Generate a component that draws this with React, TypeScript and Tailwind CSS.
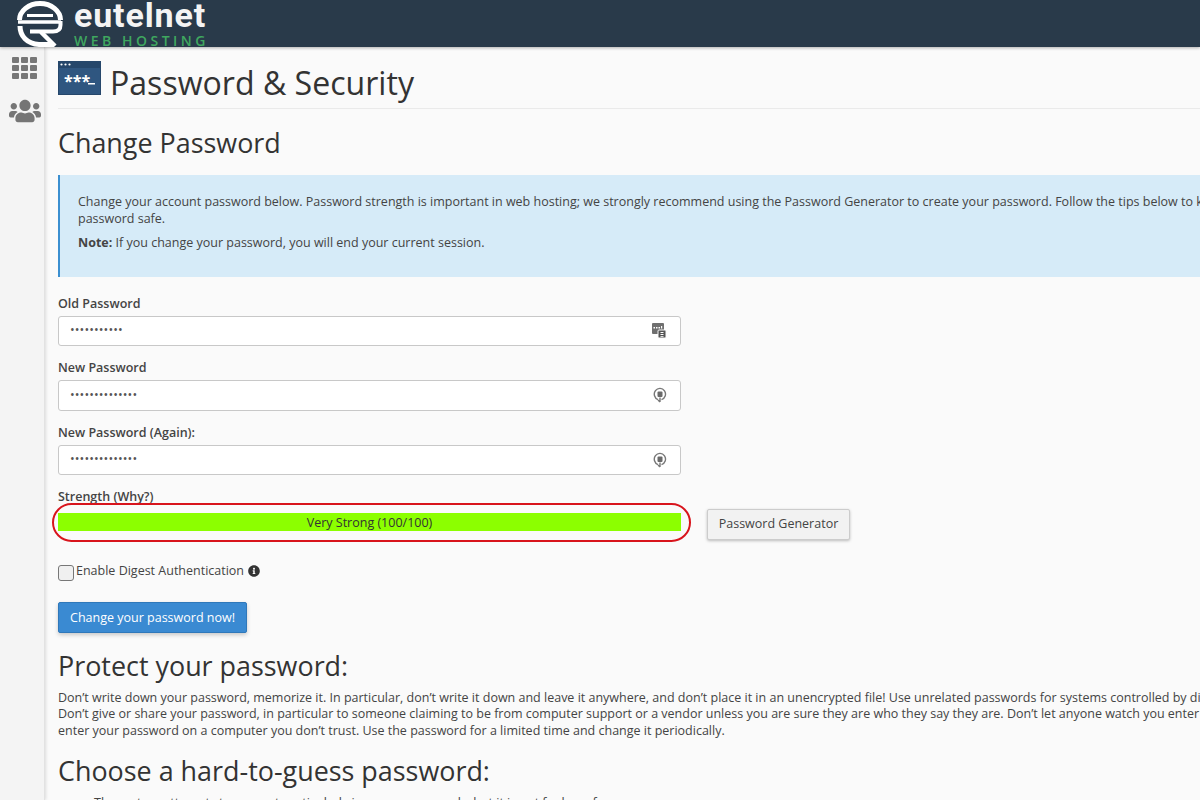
import { FaUsers, FaInfoCircle } from "react-icons/fa"

function Logo() {
  return (
    <svg width="46" height="47" viewBox="0 0 46 47" className="shrink-0" fill="none" stroke="#fff">
      <path d="M2.5 20 A 20.5 16.5 0 0 1 43.5 20" strokeWidth="5" />
      <path d="M10 15.5 H 36" strokeWidth="3" />
      <path d="M1 22 H 44" strokeWidth="3.5" />
      <path d="M43.5 21 V 25 Q 43.5 31.5 36 31.5 H 13" strokeWidth="4" />
      <path d="M3 26 C 3 36 10 44 22 44.5 H 37" strokeWidth="5" />
      <path d="M24 32 L 38 46" strokeWidth="4.5" />
    </svg>
  )
}

function PasswordPageIcon() {
  return (
    <svg width="43" height="34" viewBox="0 0 43 34" className="shrink-0">
      <rect width="43" height="34" fill="#2f5680" />
      <rect width="43" height="7" fill="#26476b" />
      <rect x="0.5" y="0.5" width="42" height="33" fill="none" stroke="#26476b" />
      <circle cx="3.5" cy="3.5" r="1.1" fill="#fff" />
      <circle cx="7.5" cy="3.5" r="1.1" fill="#fff" />
      <circle cx="11.5" cy="3.5" r="1.1" fill="#fff" />
      <text x="6" y="26" fill="#fff" fontSize="16" fontWeight="700" fontFamily="'Open Sans', sans-serif">***</text>
      <rect x="30" y="22" width="7" height="1.5" fill="#fff" />
    </svg>
  )
}

function KeyIcon() {
  return (
    <svg width="16" height="17" viewBox="0 0 16 17" className="shrink-0">
      <rect x="1" y="1" width="12" height="11" rx="1" fill="#6f6f6f" />
      <rect x="2.5" y="5" width="1.5" height="1.5" fill="#fff" />
      <rect x="5" y="5" width="1.5" height="1.5" fill="#fff" />
      <rect x="7.5" y="5" width="1.5" height="1.5" fill="#fff" />
      <rect x="10" y="4" width="1.2" height="2.5" fill="#fff" />
      <rect x="7" y="8" width="8" height="8" rx="1" fill="#555" stroke="#fafafa" />
      <rect x="9.5" y="10" width="3" height="1" fill="#fff" />
      <rect x="9.5" y="12" width="3" height="1" fill="#fff" />
      <rect x="9.5" y="14" width="3" height="0.8" fill="#fff" />
    </svg>
  )
}

function RefreshLockIcon() {
  return (
    <svg width="14" height="16" viewBox="0 0 14 16" className="shrink-0">
      <path d="M8.5 12.7 A 5.6 5.8 0 1 0 5 12.6" fill="none" stroke="#777" strokeWidth="1.4" />
      <rect x="4.5" y="4.5" width="5" height="5.5" rx="1" fill="#6a6a6a" />
      <path d="M7 10.5 V 15 M 5 13 L 7 15" stroke="#777" strokeWidth="1.4" fill="none" />
    </svg>
  )
}

function PasswordField({ label, dots, icon }: { label: string; dots: string; icon: React.ReactNode }) {
  return (
    <div className="w-[623px]">
      <label className="block text-[12.5px] leading-[17px] font-semibold text-[#444]">{label}</label>
      <div className="mt-[4px] h-[30.5px] flex items-center justify-between pl-[11px] pr-[13px] bg-white border border-[#c8c8c8] rounded-[3px]">
        <span className="text-[12.5px] text-[#555] tracking-[0.1px]">{dots}</span>
        {icon}
      </div>
    </div>
  )
}

export default function App() {
  return (
    <div className="w-[1200px] h-[800px] overflow-hidden bg-[#fafafa] text-[#333] font-['Open_Sans',sans-serif] text-[12.5px]">
      <header className="h-[47px] bg-[#293a4a] flex items-start pl-[17px] shadow-[0_1px_3px_rgba(0,0,0,0.3)] relative z-10 overflow-hidden">
        <Logo />
        <div className="ml-[11px] flex flex-col">
          <span className="text-[34px] leading-[30px] font-bold text-[#f4f4f4] tracking-[0.85px] font-['Roboto',sans-serif]">eutelnet</span>
          <span className="text-[14px] leading-[13px] mt-[4px] font-semibold text-[#3fa75f] tracking-[3.5px]">WEB HOSTING</span>
        </div>
      </header>
      <div className="flex h-[753px]">
        <aside className="w-[45px] shrink-0 bg-[#f4f4f4] border-r border-[#e2e2e2] shadow-[1px_0_3px_rgba(0,0,0,0.12)] flex flex-col items-center pl-[5px] pt-[10px] gap-[20px] text-[#757575]">
          <div className="grid grid-cols-3 gap-[1.5px] w-[25px] h-[22px]">
            {Array.from({ length: 9 }).map((_, i) => (
              <div key={i} className="bg-[#777] rounded-[1px]" />
            ))}
          </div>
          <FaUsers size={32} className="mt-[-4px]" />
        </aside>
        <main className="flex-1 min-w-0 pl-[13px] overflow-hidden">
          <div className="flex items-start gap-[9px] pt-[14px] h-[62px] border-b border-[#eaeaea] w-[1200px]">
            <PasswordPageIcon />
            <h1 className="text-[32.1px] leading-[40px] text-[#333] mt-[2px]">Password &amp; Security</h1>
          </div>
          <h2 className="text-[26.9px] leading-[34px] mt-[17px] text-[#333]">Change Password</h2>
          <div className="mt-[15px] w-[1200px] h-[102px] bg-[#d6ebf8] border-l-2 border-[#3b8fd0] pl-[18px] pt-[19px] leading-[16.5px] text-[#444] whitespace-nowrap">
            <p>Change your account password below. Password strength is important in web hosting; we strongly recommend using the Password Generator to create your password. Follow the tips below to keep your</p>
            <p>password safe.</p>
            <p className="mt-[8px]"><b className="font-bold">Note:</b> If you change your password, you will end your current session.</p>
          </div>
          <div className="mt-[17.5px] flex flex-col gap-[13px]">
            <PasswordField label="Old Password" dots="•••••••••••" icon={<KeyIcon />} />
            <PasswordField label="New Password" dots="••••••••••••••" icon={<RefreshLockIcon />} />
            <PasswordField label="New Password (Again):" dots="••••••••••••••" icon={<RefreshLockIcon />} />
          </div>
          <div className="mt-[12.5px] leading-[17px] text-[#444] font-semibold">Strength (Why?)</div>
          <div className="relative flex items-start mt-[8px]">
            <div className="w-[623px] h-[18px] bg-[#8cff00] text-center leading-[20px] text-[#333]">Very Strong (100/100)</div>
            <button className="ml-[26px] mt-[-4px] pt-[1px] h-[31px] w-[143px] bg-[#f2f2f2] border border-[#ccc] rounded-[2px] shadow-[0_1px_3px_rgba(0,0,0,0.25)] text-[#444]">Password Generator</button>
            <div className="absolute left-[-6px] top-[-10px] w-[639px] h-[39px] border-2 border-[#d8141c] rounded-[20px] pointer-events-none" />
          </div>
          <div className="mt-[23px] flex items-center text-[#444] h-[17px]">
            <span className="w-[16px] h-[16px] mt-[3px] mr-[2px] rounded-[3px] border border-[#777] bg-[#f0f0f0]" />
            <span>Enable Digest Authentication</span>
            <FaInfoCircle size={12} className="ml-[4px] text-[#333]" />
          </div>
          <button className="mt-[22px] pt-[2px] block h-[31px] w-[189px] bg-[#3a8ad2] border border-[#2f78ba] rounded-[2px] text-white shadow-[0_2px_4px_rgba(0,0,0,0.2)]">Change your password now!</button>
          <h2 className="text-[26.9px] leading-[34px] mt-[16px] text-[#333]">Protect your password:</h2>
          <div className="mt-[7px] leading-[16.5px] text-[#444] whitespace-nowrap">
            <p>Don’t write down your password, memorize it. In particular, don’t write it down and leave it anywhere, and don’t place it in an unencrypted file! Use unrelated passwords for systems controlled by different organizations.</p>
            <p>Don’t give or share your password, in particular to someone claiming to be from computer support or a vendor unless you are sure they are who they say they are. Don’t let anyone watch you enter your password. Don’t</p>
            <p>enter your password on a computer you don’t trust. Use the password for a limited time and change it periodically.</p>
          </div>
          <h2 className="text-[26.9px] leading-[34px] mt-[15px] text-[#333]">Choose a hard-to-guess password:</h2>
          <ul className="list-disc pl-[36px] mt-[6px] leading-[17px] text-[#444] whitespace-nowrap">
            <li>The system attempts to prevent particularly insecure passwords, but it is not foolproof.</li>
          </ul>
        </main>
      </div>
    </div>
  )
}
